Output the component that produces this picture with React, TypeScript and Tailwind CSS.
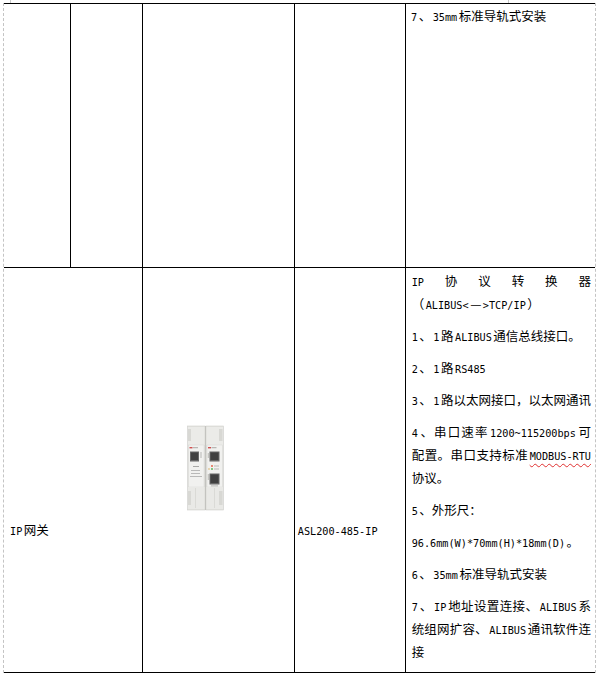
import React from 'react'

const LAT = "font-['DejaVu_Sans_Mono'] text-[10.2px] leading-none"

// split a line into CJK / latin runs, latin runs get the narrow mono face
function Mixed({ text }: { text: string }) {
  const parts = text.split(/([\x21-\x7e]+)/)
  return (
    <>
      {parts.map((p, i) => {
        if (i % 2 === 0) return p ? <span key={i}>{p}</span> : null
        const first = i === 1 && parts[0] === ''
        const last = i === parts.length - 2 && parts[parts.length - 1] === ''
        return (
          <span
            key={i}
            className={`${LAT} ${first ? '' : 'ml-[1.5px]'} ${last ? '' : 'mr-[1.5px]'}`}
          >
            {p}
          </span>
        )
      })}
    </>
  )
}

function Line({ text, justify }: { text: string; justify?: boolean }) {
  return (
    <div
      className={`h-[23px] whitespace-nowrap ${justify ? 'text-justify [text-align-last:justify]' : ''}`}
    >
      <Mixed text={text} />
    </div>
  )
}

function Device() {
  return (
    <svg width="37" height="86" viewBox="0 0 37 86">
      {/* left module */}
      <rect x="0.5" y="1" width="17.5" height="84" fill="#e3e3df" stroke="#cfcfcb" strokeWidth="0.6" />
      <rect x="1" y="2" width="16.5" height="18" fill="#ebebe8" />
      <rect x="1" y="4" width="3" height="12" fill="#d8d8d4" />
      <rect x="1.5" y="20" width="15.5" height="42" fill="#f1f1ef" stroke="#d4d4d0" strokeWidth="0.4" />
      <rect x="2.5" y="22" width="3" height="1.4" fill="#d05050" />
      <rect x="6" y="22.2" width="5" height="1" fill="#a8a8a6" />
      <rect x="3" y="26.5" width="9" height="10" fill="#666" />
      <rect x="4" y="27.5" width="7" height="7.5" fill="#404040" />
      <rect x="13.5" y="27" width="1" height="6" fill="#b8b8b5" />
      <rect x="6" y="41" width="6" height="0.9" fill="#a0a09e" />
      <rect x="4" y="45" width="9" height="0.8" fill="#acacaa" />
      <rect x="4" y="48" width="9" height="0.8" fill="#acacaa" />
      <rect x="3" y="51" width="12" height="0.8" fill="#acacaa" />
      <rect x="1" y="62" width="16.5" height="22" fill="#e9e9e6" />
      <rect x="1" y="66" width="3" height="14" fill="#d8d8d4" />
      <rect x="8" y="63" width="1" height="20" fill="#dadad6" />
      {/* seam */}
      <rect x="18" y="1" width="1" height="84" fill="#bebeba" />
      {/* right module */}
      <rect x="19" y="1" width="17.5" height="84" fill="#e3e3df" stroke="#cfcfcb" strokeWidth="0.6" />
      <rect x="19.5" y="2" width="16.5" height="18" fill="#ebebe8" />
      <rect x="32" y="4" width="3.5" height="12" fill="#d8d8d4" />
      <rect x="20" y="20" width="15.5" height="42" fill="#f1f1ef" stroke="#d4d4d0" strokeWidth="0.4" />
      <rect x="21" y="22" width="3" height="1.4" fill="#d05050" />
      <rect x="24.5" y="22.2" width="5" height="1" fill="#a8a8a6" />
      <rect x="20.8" y="28" width="1" height="5" fill="#b8b8b5" />
      <rect x="22.5" y="26.5" width="10" height="10" fill="#666" />
      <rect x="23.5" y="27.5" width="8" height="7.5" fill="#404040" />
      <circle cx="25" cy="41" r="0.9" fill="#e05a3a" />
      <circle cx="25" cy="44" r="0.9" fill="#4fb04f" />
      <circle cx="22" cy="44" r="0.7" fill="#d6a040" />
      <rect x="27" y="40.6" width="5" height="0.8" fill="#acacaa" />
      <rect x="27" y="43.6" width="5" height="0.8" fill="#acacaa" />
      <rect x="20.8" y="49" width="1" height="6" fill="#b8b8b5" />
      <rect x="22.5" y="48.5" width="10" height="11" fill="#666" />
      <rect x="23.5" y="49.5" width="8" height="8.5" fill="#404040" />
      <rect x="24" y="60.5" width="7" height="0.8" fill="#acacaa" />
      <rect x="19.5" y="62" width="16.5" height="22" fill="#e9e9e6" />
      <rect x="32" y="66" width="3.5" height="14" fill="#d8d8d4" />
      <rect x="27" y="63" width="1" height="20" fill="#dadad6" />
    </svg>
  )
}

export default function App() {
  return (
    <div className="w-[598px] h-[675px] bg-white text-black text-[12.5px] leading-[23px] [font-family:'Noto_Sans_CJK_SC',sans-serif]">
      <div className="flex h-[3px]">
        <div className="w-[10px]" />
        <div className="w-px bg-[#c8c8c8]" />
        <div className="w-[497px]" />
        <div className="w-px bg-[#c8c8c8]" />
      </div>

      <div className="ml-[3px] w-[593px] border-x border-dashed border-[#c4c4c4]">
        {/* row 1 – tail of previous item */}
        <div className="flex h-[265px] border-y border-black">
          <div className="w-[67px] border-r border-black" />
          <div className="w-[72px] border-r border-black" />
          <div className="w-[152px] border-r border-black" />
          <div className="w-[111px] border-r border-black" />
          <div className="flex-1 pl-[5px]">
            <Line text="7、35mm标准导轨式安装" />
          </div>
        </div>

        {/* row 2 – IP gateway */}
        <div className="flex h-[405px] border-b border-black">
          <div className="w-[139px] border-r border-black pl-[6px] pt-[250px]">
            <Line text="IP网关" />
          </div>
          <div className="w-[152px] border-r border-black pl-[44px] pt-[157px]">
            <Device />
          </div>
          <div className="w-[111px] border-r border-black pl-[3px] pt-[250px]">
            <Line text="ASL200-485-IP" />
          </div>
          <div className="flex-1 pl-[6px] pr-[4px] pt-px flex flex-col gap-[9px]">
            <div>
              <div className="h-[23px] flex items-baseline justify-between whitespace-nowrap">
                <span className={LAT}>IP</span>
                <span>协</span>
                <span>议</span>
                <span>转</span>
                <span>换</span>
                <span>器</span>
              </div>
              <Line text="（ALIBUS<—>TCP/IP）" />
            </div>
            <Line text="1、1路ALIBUS通信总线接口。" />
            <Line text="2、1路RS485" />
            <Line text="3、1路以太网接口，以太网通讯" />
            <div>
              <Line text="4、串口速率1200~115200bps可" justify />
              <div className="h-[23px] whitespace-nowrap text-justify [text-align-last:justify]">
                <span>配置。串口支持标准</span>
                <span
                  className={`${LAT} ml-[1.5px] underline decoration-wavy decoration-[#e03030] decoration-1 underline-offset-[3px]`}
                >
                  MODBUS-RTU
                </span>
              </div>
              <Line text="协议。" />
            </div>
            <Line text="5、外形尺：" />
            <Line text="96.6mm(W)*70mm(H)*18mm(D)。" />
            <Line text="6、35mm标准导轨式安装" />
            <div>
              <Line text="7、IP地址设置连接、ALIBUS系" justify />
              <Line text="统组网扩容、ALIBUS通讯软件连" justify />
              <Line text="接" />
            </div>
          </div>
        </div>
      </div>
    </div>
  )
}
